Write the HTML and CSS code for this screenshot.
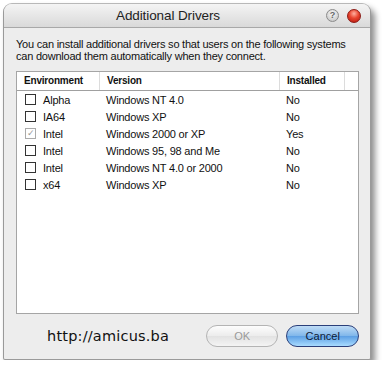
FILE: index.html
```html
<!DOCTYPE html>
<html lang="en">
<head>
  <meta charset="UTF-8" />
  <title>Additional Drivers</title>
  <link rel="stylesheet" href="styles.css">
</head>
<body>
  <div class="window">
    <div class="titlebar">
      <span class="title">Additional Drivers</span>
      <div class="controls">
        <span class="help">?</span>
        <span class="close"></span>
      </div>
    </div>

    <div class="content">
      <p class="intro">You can install additional drivers so that users on the following systems<br>can download them automatically when they connect.</p>

      <div class="listbox">
        <div class="row head">
          <span class="col env">Environment</span>
          <span class="col ver">Version</span>
          <span class="col inst">Installed</span>
          <span class="col rest"></span>
        </div>
        <div class="row">
          <span class="col env"><span class="check"></span>Alpha</span>
          <span class="col ver">Windows NT 4.0</span>
          <span class="col inst">No</span>
        </div>
        <div class="row">
          <span class="col env"><span class="check"></span>IA64</span>
          <span class="col ver">Windows XP</span>
          <span class="col inst">No</span>
        </div>
        <div class="row">
          <span class="col env"><span class="check checked">&#10003;</span>Intel</span>
          <span class="col ver">Windows 2000 or XP</span>
          <span class="col inst">Yes</span>
        </div>
        <div class="row">
          <span class="col env"><span class="check"></span>Intel</span>
          <span class="col ver">Windows 95, 98 and Me</span>
          <span class="col inst">No</span>
        </div>
        <div class="row">
          <span class="col env"><span class="check"></span>Intel</span>
          <span class="col ver">Windows NT 4.0 or 2000</span>
          <span class="col inst">No</span>
        </div>
        <div class="row">
          <span class="col env"><span class="check"></span>x64</span>
          <span class="col ver">Windows XP</span>
          <span class="col inst">No</span>
        </div>
      </div>

      <div class="footer">
        <span class="url">http://amicus.ba</span>
        <button class="btn ok">OK</button>
        <button class="btn cancel">Cancel</button>
      </div>
    </div>
  </div>
</body>
</html>
```

FILE: styles.css
```css
body {
  margin: 0;
  padding: 3px 0 0 3px;
  background: #fff;
  font-family: "Liberation Sans", Arial, sans-serif;
  font-size: 11px;
  letter-spacing: -0.2px;
  color: #111;
}

.window {
  width: 366px;
  height: 355px;
  background: #ededed;
  border: 1px solid #9a9a9a;
  border-top-color: #b8b8b8;
  border-radius: 9px 9px 2px 2px;
  box-shadow: 4px 5px 6px rgba(0,0,0,0.45);
  display: flex;
  flex-direction: column;
  overflow: hidden;
}

.titlebar {
  height: 23px;
  display: flex;
  align-items: center;
  background: linear-gradient(#f4f4f4, #d9d9d9);
  border-bottom: 1px solid #a8a8a8;
}

.title {
  flex: 1;
  text-align: center;
  font-size: 13.5px;
  letter-spacing: -0.1px;
  color: #222;
  padding-left: 6px;
}

.controls {
  display: flex;
  align-items: center;
  gap: 8px;
  padding-right: 9px;
}

.help {
  width: 11px;
  height: 11px;
  border-radius: 50%;
  border: 1px solid #8a8a8a;
  background: radial-gradient(circle at 50% 35%, #fafafa, #bdbdbd);
  font-size: 9px;
  font-weight: bold;
  line-height: 11px;
  letter-spacing: 0;
  text-align: center;
  color: #666;
}

.close {
  width: 12px;
  height: 12px;
  border-radius: 50%;
  border: 1px solid #8c1a14;
  background: radial-gradient(circle at 50% 30%, #ffb0a0 0, #e8452f 45%, #b3150c 100%);
}

.content {
  flex: 1;
  display: flex;
  flex-direction: column;
  padding: 0 11px 0 12px;
}

.intro {
  margin: 10px 0 0 0;
  line-height: 12px;
  letter-spacing: -0.22px;
  white-space: nowrap;
}

.listbox {
  margin: 9px 0 0 0;
  height: 241px;
  background: #fff;
  border: 1px solid #a5a5a5;
}

.row {
  display: flex;
  height: 17px;
  align-items: center;
}

.row.head {
  height: 18px;
  border-bottom: 1px solid #a0a0a0;
  font-weight: bold;
  font-size: 10px;
  letter-spacing: -0.2px;
}

.col {
  flex-shrink: 0;
  padding-left: 7px;
  white-space: nowrap;
}

.env {
  width: 75px;
  display: flex;
  align-items: center;
}

.ver {
  width: 172px;
}

.inst {
  width: 57px;
}

.head .col {
  border-right: 1px solid #dcdcdc;
  height: 18px;
  line-height: 18px;
}

.head .rest {
  flex: 1;
  border-right: none;
}

.row:not(.head) .env {
  padding-left: 8px;
  width: 74px;
}

.row:not(.head) .ver {
  width: 173px;
}

.check {
  width: 9px;
  height: 9px;
  border: 1px solid #333;
  margin-right: 7px;
  font-size: 9px;
  line-height: 9px;
  letter-spacing: 0;
  text-align: center;
  color: #999;
}

.check.checked {
  border-color: #aaa;
}

.footer {
  flex: 1;
  display: flex;
  align-items: center;
  padding-bottom: 2px;
}

.url {
  font-family: "DejaVu Sans", sans-serif;
  font-size: 14.5px;
  letter-spacing: 0.2px;
  color: #111;
  margin-left: 31px;
  width: 160px;
}

.btn {
  width: 73px;
  height: 22px;
  border-radius: 11px;
  font-family: "Liberation Sans", Arial, sans-serif;
  font-size: 11px;
  padding: 0;
}

.ok {
  border: 1px solid #b4b4b4;
  background: linear-gradient(#fdfdfd, #ececec 50%, #e2e2e2 51%, #f4f4f4);
  color: #9a9a9a;
}

.cancel {
  margin-left: 8px;
  border: 1px solid #2b3f7a;
  background: linear-gradient(#bfdcf6, #7fb6ea 50%, #5c9fe4 51%, #a8dbff);
  color: #0e1a36;
}
```
